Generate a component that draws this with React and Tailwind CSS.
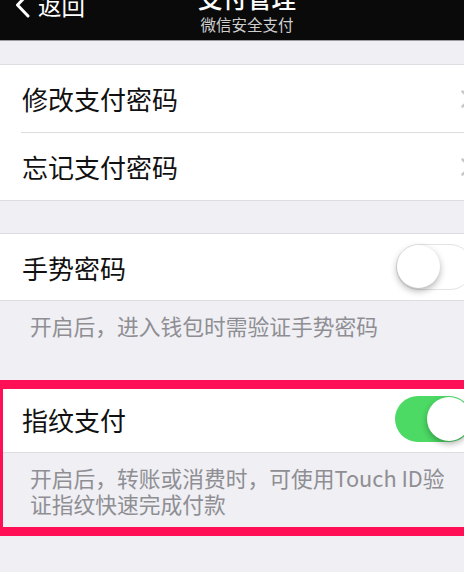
import React from "react";

const font = { fontFamily: '"Noto Sans CJK SC", "Noto Sans", sans-serif' };

function Chevron() {
  return (
    <svg width="11" height="18" viewBox="0 0 11 18" className="shrink-0 -mr-[8px]">
      <path d="M1.5 1.5 L9 9 L1.5 16.5" fill="none" stroke="#c7c7cc" strokeWidth="2.5" strokeLinecap="round" strokeLinejoin="round" />
    </svg>
  );
}

function Toggle({ on }) {
  return (
    <div
      className={
        on
          ? "relative shrink-0 -mr-[8px] h-[46px] w-[77px] rounded-full bg-[#4cd964]"
          : "relative shrink-0 -mr-[9px] h-[46px] w-[77px] rounded-full border-[1.5px] border-[#e3e3e8] bg-white"
      }
    >
      <div
        className={
          on
            ? "absolute right-[1px] top-[1px] h-[44px] w-[44px] rounded-full bg-white shadow-[0_3px_6px_rgba(0,0,0,0.3)]"
            : "absolute left-[0px] top-[0px] h-[43px] w-[43px] rounded-full bg-white shadow-[0_3px_7px_rgba(0,0,0,0.3)]"
        }
      />
    </div>
  );
}

export default function App() {
  return (
    <div className="relative h-[572px] w-[464px] overflow-hidden bg-[#efeff4]" style={font}>
      {/* Nav bar */}
      <div className="relative flex h-[41px] justify-center border-b border-[#9c9ca0] bg-[#0a0a0a]">
        <div className="absolute left-[14px] top-[-9px] flex items-center gap-[7px] text-white">
          <svg width="17" height="28" viewBox="0 0 17 28">
            <path d="M14 3 L3.5 14 L14 25" fill="none" stroke="white" strokeWidth="3" strokeLinecap="round" strokeLinejoin="round" />
          </svg>
          <span className="text-[23.5px] leading-[24px]">返回</span>
        </div>
        <div className="-mt-[14px] ml-[30px] flex flex-col items-center">
          <span className="text-[24.5px] leading-[24px] font-medium text-white">支付管理</span>
          <span className="mt-[4px] text-[15.5px] leading-[20px] text-[#cfcfcf]">微信安全支付</span>
        </div>
      </div>

      {/* Group 1 */}
      <div className="mt-[23px] border-y border-[#dcdce1] bg-white">
        <div className="flex h-[67px] items-center justify-between pl-[22px] text-[26px] text-[#111]">
          <span>修改支付密码</span>
          <Chevron />
        </div>
        <div className="ml-[21px] h-px bg-[#dcdce1]" />
        <div className="flex h-[67px] items-center justify-between pl-[22px] text-[26px] text-[#111]">
          <span>忘记支付密码</span>
          <Chevron />
        </div>
      </div>

      {/* Group 2 */}
      <div className="mt-[32px] border-y border-[#dcdce1] bg-white">
        <div className="flex h-[66px] items-center justify-between pl-[22px] text-[26px] text-[#111]">
          <span>手势密码</span>
          <Toggle on={false} />
        </div>
      </div>
      <div className="pl-[30px] pt-[12px] text-[21.75px] leading-[26px] text-[#8e8e93]">
        开启后，进入钱包时需验证手势密码
      </div>

      {/* Group 3 */}
      <div className="mt-[47px] border-b border-[#dcdce1] bg-white">
        <div className="flex h-[66px] items-center justify-between pl-[22px] text-[26px] text-[#111]">
          <span>指纹支付</span>
          <Toggle on={true} />
        </div>
      </div>
      <div className="flex flex-col pl-[30px] pt-[12px] text-[21.75px] leading-[26px] text-[#8e8e93]">
        <span className="whitespace-nowrap">开启后，转账或消费时，可使用Touch ID验</span>
        <span className="whitespace-nowrap">证指纹快速完成付款</span>
      </div>

      {/* Red annotation box */}
      <div className="pointer-events-none absolute left-0 top-[380px] h-[156px] w-[480px] border-y-[9px] border-l-[3px] border-[#fe0f56]" />
    </div>
  );
}
